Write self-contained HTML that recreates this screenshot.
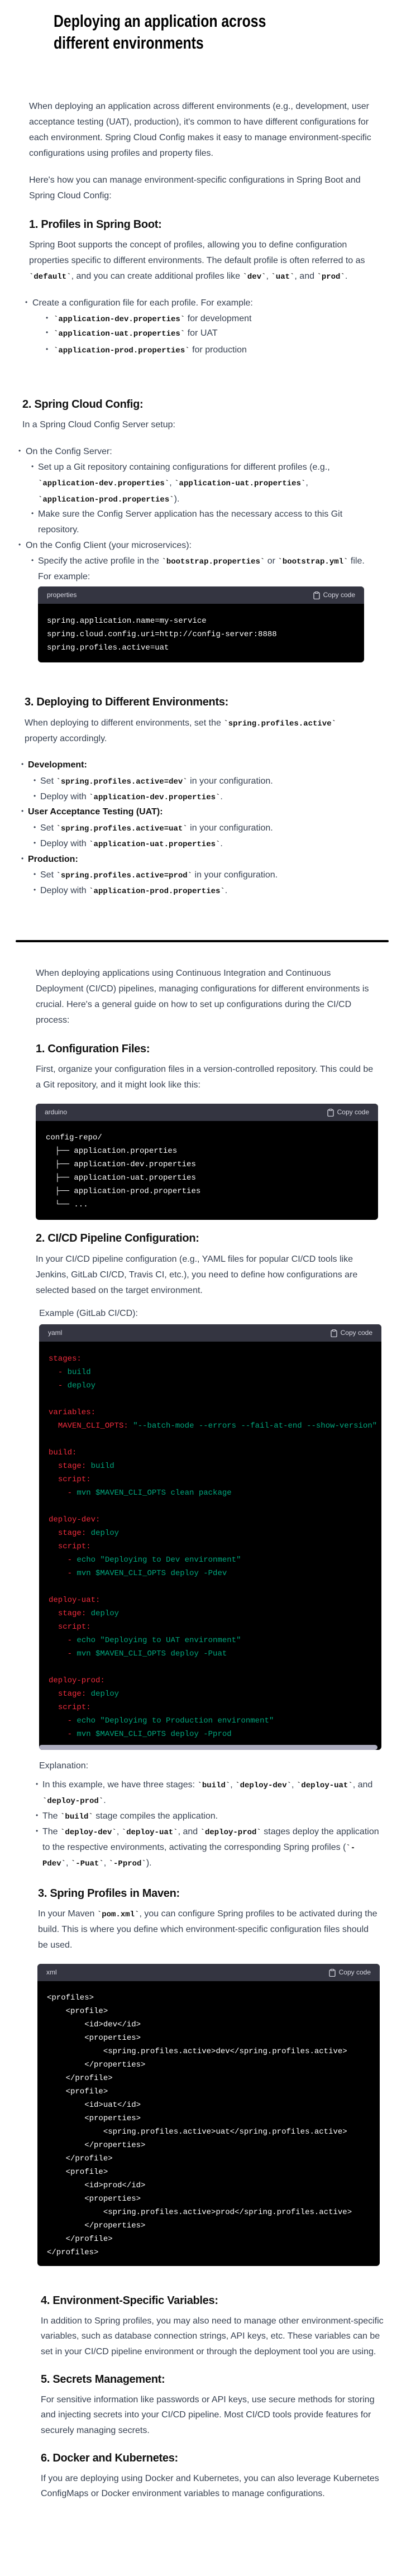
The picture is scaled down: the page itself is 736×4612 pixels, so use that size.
<!DOCTYPE html>
<html><head><meta charset="utf-8">
<style>
*{margin:0;padding:0;box-sizing:border-box}
html,body{width:736px;height:4612px;background:#fff;overflow:hidden}
body{position:relative;font-family:"Liberation Sans",sans-serif}
.t{position:absolute;white-space:nowrap;font-size:16px;line-height:28px;color:#374151}
.h{position:absolute;white-space:nowrap;font-size:20px;line-height:28px;font-weight:bold;color:#111;letter-spacing:-0.3px}
.b{font-weight:bold;color:#111}
code{font-family:"Liberation Mono",monospace;font-weight:bold;font-size:14px;color:#111}
.d{position:absolute;font-size:12px;line-height:28px;color:#374151}
.cb{position:absolute;background:#000;border-radius:6px;overflow:hidden}
.ch{height:31px;background:#343541;color:#d9d9e3;font-size:12px;line-height:31px;padding-left:16px;position:relative}
.cc{position:absolute;right:16px;top:0;display:flex;align-items:center;height:31px;gap:6px}
.cl{position:absolute;white-space:pre;font-family:"Liberation Mono","DejaVu Sans Mono",monospace;font-size:14px;line-height:24px;color:#fff}
.r{color:#f22c3d}.g{color:#00a67d}
</style></head><body>

<div style="position:absolute;left:96px;top:18px;font-size:31px;line-height:39px;font-weight:bold;color:#000;transform:scaleX(0.8);transform-origin:left top;white-space:nowrap">Deploying an application across<br>different environments</div>

<div class="t" style="left:52px;top:177px">When deploying an application across different environments (e.g., development, user</div>
<div class="t" style="left:52px;top:205px">acceptance testing (UAT), production), it's common to have different configurations for</div>
<div class="t" style="left:52px;top:233px">each environment. Spring Cloud Config makes it easy to manage environment-specific</div>
<div class="t" style="left:52px;top:261px">configurations using profiles and property files.</div>
<div class="t" style="left:52px;top:309px">Here's how you can manage environment-specific configurations in Spring Boot and</div>
<div class="t" style="left:52px;top:337px">Spring Cloud Config:</div>

<div class="h" style="left:52px;top:388px">1. Profiles in Spring Boot:</div>
<div class="t" style="left:52px;top:425px">Spring Boot supports the concept of profiles, allowing you to define configuration</div>
<div class="t" style="left:52px;top:453px">properties specific to different environments. The default profile is often referred to as</div>
<div class="t" style="left:52px;top:481px"><code>`default`</code>, and you can create additional profiles like <code>`dev`</code>, <code>`uat`</code>, and <code>`prod`</code>.</div>
<div class="d" style="left:45px;top:527px">•</div>
<div class="t" style="left:58px;top:529px">Create a configuration file for each profile. For example:</div>
<div class="d" style="left:82px;top:555px">•</div>
<div class="t" style="left:96px;top:557px"><code>`application-dev.properties`</code> for development</div>
<div class="d" style="left:82px;top:581px">•</div>
<div class="t" style="left:96px;top:583px"><code>`application-uat.properties`</code> for UAT</div>
<div class="d" style="left:82px;top:611px">•</div>
<div class="t" style="left:96px;top:613px"><code>`application-prod.properties`</code> for production</div>

<div class="h" style="left:40px;top:710px">2. Spring Cloud Config:</div>
<div class="t" style="left:40px;top:747px">In a Spring Cloud Config Server setup:</div>
<div class="d" style="left:33px;top:793px">•</div>
<div class="t" style="left:46px;top:795px">On the Config Server:</div>
<div class="d" style="left:56px;top:821px">•</div>
<div class="t" style="left:68px;top:823px">Set up a Git repository containing configurations for different profiles (e.g.,</div>
<div class="t" style="left:68px;top:851px"><code>`application-dev.properties`</code>, <code>`application-uat.properties`</code>,</div>
<div class="t" style="left:68px;top:880px"><code>`application-prod.properties`</code>).</div>
<div class="d" style="left:56px;top:905px">•</div>
<div class="t" style="left:68px;top:907px">Make sure the Config Server application has the necessary access to this Git</div>
<div class="t" style="left:68px;top:935px">repository.</div>
<div class="d" style="left:33px;top:961px">•</div>
<div class="t" style="left:46px;top:963px">On the Config Client (your microservices):</div>
<div class="d" style="left:56px;top:989px">•</div>
<div class="t" style="left:68px;top:991px">Specify the active profile in the <code>`bootstrap.properties`</code> or <code>`bootstrap.yml`</code> file.</div>
<div class="t" style="left:68px;top:1019px">For example:</div>

<div class="cb" style="left:68px;top:1050px;width:584px;height:136px">
<div class="ch">properties<div class="cc"><svg width="12" height="14" viewBox="0 0 12 14"><rect x="1" y="2" width="10" height="11.5" rx="1.5" fill="none" stroke="#d9d9e3" stroke-width="1.3"/><rect x="3.5" y="0.7" width="5" height="2.6" rx="0.6" fill="#343541" stroke="#d9d9e3" stroke-width="1.2"/></svg>Copy code</div></div>
</div>
<div class="cl" style="left:84px;top:1100px">spring.application.name=my-service
spring.cloud.config.uri=http://config-server:8888
spring.profiles.active=uat</div>

<div class="h" style="left:44px;top:1243px">3. Deploying to Different Environments:</div>
<div class="t" style="left:44px;top:1281px">When deploying to different environments, set the <code>`spring.profiles.active`</code></div>
<div class="t" style="left:44px;top:1309px">property accordingly.</div>
<div class="d" style="left:38px;top:1354px">•</div>
<div class="t b" style="left:50px;top:1356px">Development:</div>
<div class="d" style="left:60px;top:1383px">•</div>
<div class="t" style="left:72px;top:1385px">Set <code>`spring.profiles.active=dev`</code> in your configuration.</div>
<div class="d" style="left:60px;top:1411px">•</div>
<div class="t" style="left:72px;top:1413px">Deploy with <code>`application-dev.properties`</code>.</div>
<div class="d" style="left:38px;top:1438px">•</div>
<div class="t b" style="left:50px;top:1440px">User Acceptance Testing (UAT):</div>
<div class="d" style="left:60px;top:1467px">•</div>
<div class="t" style="left:72px;top:1469px">Set <code>`spring.profiles.active=uat`</code> in your configuration.</div>
<div class="d" style="left:60px;top:1495px">•</div>
<div class="t" style="left:72px;top:1497px">Deploy with <code>`application-uat.properties`</code>.</div>
<div class="d" style="left:38px;top:1523px">•</div>
<div class="t b" style="left:50px;top:1525px">Production:</div>
<div class="d" style="left:60px;top:1551px">•</div>
<div class="t" style="left:72px;top:1553px">Set <code>`spring.profiles.active=prod`</code> in your configuration.</div>
<div class="d" style="left:60px;top:1579px">•</div>
<div class="t" style="left:72px;top:1581px">Deploy with <code>`application-prod.properties`</code>.</div>

<div style="position:absolute;left:28px;top:1683px;width:668px;height:4px;background:#000;border-radius:2px"></div>

<div class="t" style="left:64px;top:1729px">When deploying applications using Continuous Integration and Continuous</div>
<div class="t" style="left:64px;top:1757px">Deployment (CI/CD) pipelines, managing configurations for different environments is</div>
<div class="t" style="left:64px;top:1785px">crucial. Here's a general guide on how to set up configurations during the CI/CD</div>
<div class="t" style="left:64px;top:1813px">process:</div>

<div class="h" style="left:64px;top:1864px">1. Configuration Files:</div>
<div class="t" style="left:64px;top:1901px">First, organize your configuration files in a version-controlled repository. This could be</div>
<div class="t" style="left:64px;top:1929px">a Git repository, and it might look like this:</div>

<div class="cb" style="left:64px;top:1976px;width:613px;height:208px">
<div class="ch">arduino<div class="cc"><svg width="12" height="14" viewBox="0 0 12 14"><rect x="1" y="2" width="10" height="11.5" rx="1.5" fill="none" stroke="#d9d9e3" stroke-width="1.3"/><rect x="3.5" y="0.7" width="5" height="2.6" rx="0.6" fill="#343541" stroke="#d9d9e3" stroke-width="1.2"/></svg>Copy code</div></div>
</div>
<div class="cl" style="left:82px;top:2025px">config-repo/
  ├── application.properties
  ├── application-dev.properties
  ├── application-uat.properties
  ├── application-prod.properties
  └── ...</div>

<div class="h" style="left:64px;top:2203px">2. CI/CD Pipeline Configuration:</div>
<div class="t" style="left:64px;top:2241px">In your CI/CD pipeline configuration (e.g., YAML files for popular CI/CD tools like</div>
<div class="t" style="left:64px;top:2269px">Jenkins, GitLab CI/CD, Travis CI, etc.), you need to define how configurations are</div>
<div class="t" style="left:64px;top:2297px">selected based on the target environment.</div>
<div class="t" style="left:70px;top:2338px">Example (GitLab CI/CD):</div>

<div class="cb" style="left:70px;top:2371px;width:613px;height:762px">
<div class="ch">yaml<div class="cc"><svg width="12" height="14" viewBox="0 0 12 14"><rect x="1" y="2" width="10" height="11.5" rx="1.5" fill="none" stroke="#d9d9e3" stroke-width="1.3"/><rect x="3.5" y="0.7" width="5" height="2.6" rx="0.6" fill="#343541" stroke="#d9d9e3" stroke-width="1.2"/></svg>Copy code</div></div>
<div style="position:absolute;left:0;bottom:0;width:606px;height:9px;background:#acacbe;border-radius:5px"></div>
</div>
<div class="cl" style="left:87px;top:2421px"><span class="r">stages:</span>
  <span class="r">-</span> <span class="g">build</span>
  <span class="r">-</span> <span class="g">deploy</span>

<span class="r">variables:</span>
  <span class="r">MAVEN_CLI_OPTS:</span> <span class="g">"--batch-mode --errors --fail-at-end --show-version"</span>

<span class="r">build:</span>
  <span class="r">stage:</span> <span class="g">build</span>
  <span class="r">script:</span>
    <span class="r">-</span> <span class="g">mvn $MAVEN_CLI_OPTS clean package</span>

<span class="r">deploy-dev:</span>
  <span class="r">stage:</span> <span class="g">deploy</span>
  <span class="r">script:</span>
    <span class="r">-</span> <span class="g">echo "Deploying to Dev environment"</span>
    <span class="r">-</span> <span class="g">mvn $MAVEN_CLI_OPTS deploy -Pdev</span>

<span class="r">deploy-uat:</span>
  <span class="r">stage:</span> <span class="g">deploy</span>
  <span class="r">script:</span>
    <span class="r">-</span> <span class="g">echo "Deploying to UAT environment"</span>
    <span class="r">-</span> <span class="g">mvn $MAVEN_CLI_OPTS deploy -Puat</span>

<span class="r">deploy-prod:</span>
  <span class="r">stage:</span> <span class="g">deploy</span>
  <span class="r">script:</span>
    <span class="r">-</span> <span class="g">echo "Deploying to Production environment"</span>
    <span class="r">-</span> <span class="g">mvn $MAVEN_CLI_OPTS deploy -Pprod</span></div>

<div class="t" style="left:70px;top:3148px">Explanation:</div>
<div class="d" style="left:64px;top:3180px">•</div>
<div class="t" style="left:76px;top:3182px">In this example, we have three stages: <code>`build`</code>, <code>`deploy-dev`</code>, <code>`deploy-uat`</code>, and</div>
<div class="t" style="left:76px;top:3210px"><code>`deploy-prod`</code>.</div>
<div class="d" style="left:64px;top:3236px">•</div>
<div class="t" style="left:76px;top:3238px">The <code>`build`</code> stage compiles the application.</div>
<div class="d" style="left:64px;top:3264px">•</div>
<div class="t" style="left:76px;top:3266px">The <code>`deploy-dev`</code>, <code>`deploy-uat`</code>, and <code>`deploy-prod`</code> stages deploy the application</div>
<div class="t" style="left:76px;top:3294px">to the respective environments, activating the corresponding Spring profiles (<code>`-</code></div>
<div class="t" style="left:76px;top:3322px"><code>Pdev`</code>, <code>`-Puat`</code>, <code>`-Pprod`</code>).</div>

<div class="h" style="left:68px;top:3376px">3. Spring Profiles in Maven:</div>
<div class="t" style="left:68px;top:3413px">In your Maven <code>`pom.xml`</code>, you can configure Spring profiles to be activated during the</div>
<div class="t" style="left:68px;top:3441px">build. This is where you define which environment-specific configuration files should</div>
<div class="t" style="left:68px;top:3469px">be used.</div>

<div class="cb" style="left:67px;top:3516px;width:613px;height:541px">
<div class="ch">xml<div class="cc"><svg width="12" height="14" viewBox="0 0 12 14"><rect x="1" y="2" width="10" height="11.5" rx="1.5" fill="none" stroke="#d9d9e3" stroke-width="1.3"/><rect x="3.5" y="0.7" width="5" height="2.6" rx="0.6" fill="#343541" stroke="#d9d9e3" stroke-width="1.2"/></svg>Copy code</div></div>
</div>
<div class="cl" style="left:84px;top:3565px">&lt;profiles&gt;
    &lt;profile&gt;
        &lt;id&gt;dev&lt;/id&gt;
        &lt;properties&gt;
            &lt;spring.profiles.active&gt;dev&lt;/spring.profiles.active&gt;
        &lt;/properties&gt;
    &lt;/profile&gt;
    &lt;profile&gt;
        &lt;id&gt;uat&lt;/id&gt;
        &lt;properties&gt;
            &lt;spring.profiles.active&gt;uat&lt;/spring.profiles.active&gt;
        &lt;/properties&gt;
    &lt;/profile&gt;
    &lt;profile&gt;
        &lt;id&gt;prod&lt;/id&gt;
        &lt;properties&gt;
            &lt;spring.profiles.active&gt;prod&lt;/spring.profiles.active&gt;
        &lt;/properties&gt;
    &lt;/profile&gt;
&lt;/profiles&gt;</div>

<div class="h" style="left:73px;top:4105px">4. Environment-Specific Variables:</div>
<div class="t" style="left:73px;top:4142px">In addition to Spring profiles, you may also need to manage other environment-specific</div>
<div class="t" style="left:73px;top:4169px">variables, such as database connection strings, API keys, etc. These variables can be</div>
<div class="t" style="left:73px;top:4197px">set in your CI/CD pipeline environment or through the deployment tool you are using.</div>
<div class="h" style="left:73px;top:4246px">5. Secrets Management:</div>
<div class="t" style="left:73px;top:4283px">For sensitive information like passwords or API keys, use secure methods for storing</div>
<div class="t" style="left:73px;top:4310px">and injecting secrets into your CI/CD pipeline. Most CI/CD tools provide features for</div>
<div class="t" style="left:73px;top:4338px">securely managing secrets.</div>
<div class="h" style="left:73px;top:4387px">6. Docker and Kubernetes:</div>
<div class="t" style="left:73px;top:4424px">If you are deploying using Docker and Kubernetes, you can also leverage Kubernetes</div>
<div class="t" style="left:73px;top:4451px">ConfigMaps or Docker environment variables to manage configurations.</div>

</body></html>
